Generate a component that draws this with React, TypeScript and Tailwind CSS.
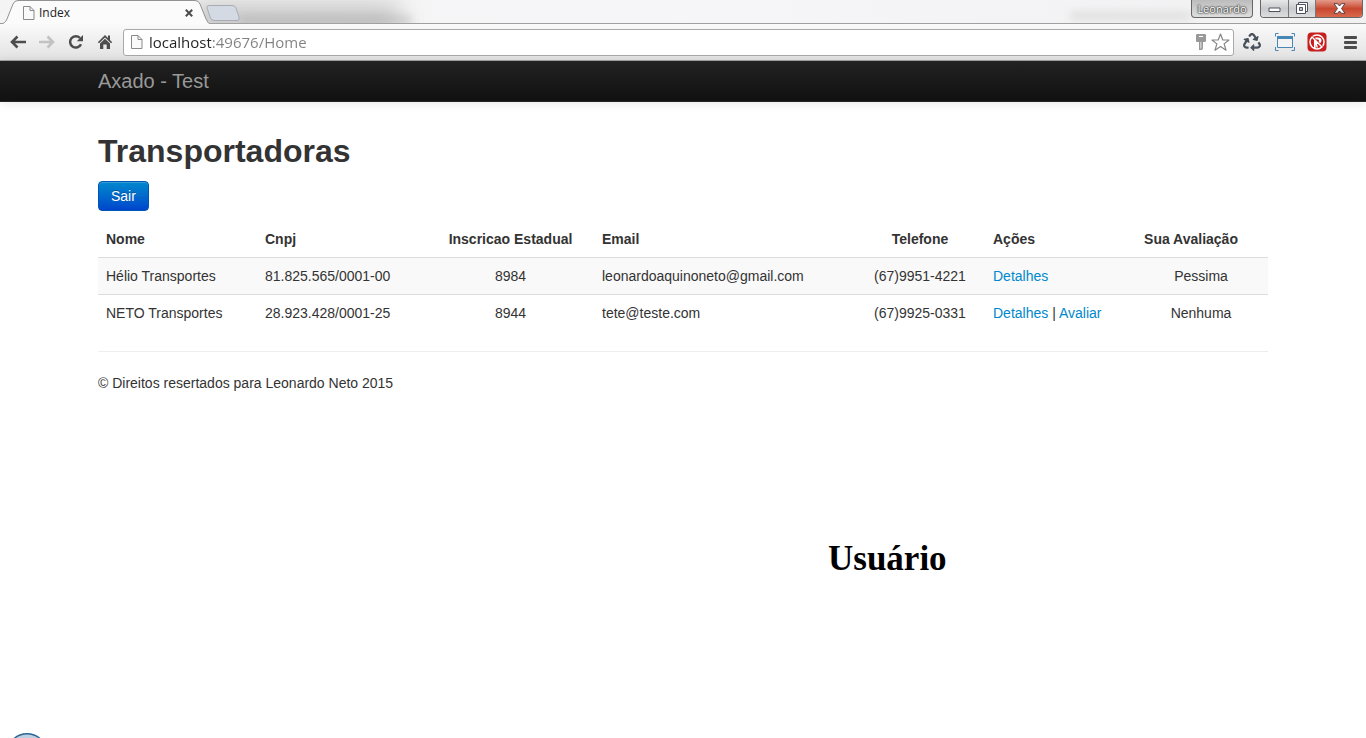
import React from "react";
import { FaRecycle } from "react-icons/fa";

function PageIcon() {
  return (
    <svg width="12" height="14" viewBox="0 0 12 14" fill="#fafafa" stroke="#8a8a8a" aria-hidden="true">
      <path d="M.5.5h6.500l4 4v9H.5z" />
      <path d="M7 .5v4h4" fill="none" />
    </svg>
  );
}

function TabStrip() {
  return (
    <div className="relative flex h-6 items-start overflow-hidden bg-linear-to-r from-[#f4f4f4] via-[#f6f6f8] to-[#f1f1f2]">
      <div className="absolute top-1 left-[190px] h-8 w-[210px] bg-[#b9b9b9] opacity-80 blur-[12px]" />
      <div className="absolute top-4 left-[240px] h-2 w-[172px] bg-[#a6a6a6] opacity-40 blur-[4px]" />
      <div className="absolute top-3 left-[1070px] h-2 w-[120px] bg-[#d0d0d0] opacity-60 blur-[4px]" />
      <div className="absolute inset-x-0 bottom-0 h-px bg-[#a0a0a0]" />
      <div className="relative flex h-6 w-[209px] items-center">
        <svg className="absolute inset-0" width="209" height="24" viewBox="0 0 209 24" aria-hidden="true">
          <path d="M0 25v-1q5 0 7-5L13 4q1.500-3.500 5-3.500h177q3.500 0 5 3.500l6 15q2 5 5 5v2z" fill="#fbfbfb" stroke="#929292" />
        </svg>
        <div className="relative flex w-full items-center pt-px pr-3 pl-[23px]">
          <PageIcon />
          <span className="ml-1 grow font-['Open_Sans',sans-serif] text-xs leading-4 text-[#222]">Index</span>
          <button aria-label="Fechar guia" className="p-1">
            <svg width="8" height="8" viewBox="0 0 8 8" stroke="#4c4c4c" strokeWidth="2">
              <path d="m.8.8 6.400 6.400M7.200.8.8 7.200" />
            </svg>
          </button>
        </div>
      </div>
      <button aria-label="Nova guia" className="relative -ml-1 mt-1">
        <svg width="36" height="18" viewBox="0 0 36 18">
          <path d="M4 1.500h23q3 0 4 2.500l3 9q1 3.500-2 3.500H9q-2.500 0-3.500-2.500L2 4q-.8-2.500 2-2.500z" fill="#d3dae3" stroke="#a9adb3" />
        </svg>
      </button>
      <div className="relative ml-auto flex pr-[3px]">
        <button className="mr-[7px] h-[18px] w-[62px] rounded-b-[4px] border border-t-0 border-[#666] bg-linear-to-b from-[#bcbcbc] to-[#dedede] font-['Open_Sans',sans-serif] text-[11px] leading-4 text-white [text-shadow:0_0_1px_#333,0_0_2px_#333,0_0_2px_#333]">
          Leonardo
        </button>
        <div className="flex h-[18px] overflow-hidden rounded-b-[4px] border border-t-0 border-[#666]">
          <button aria-label="Minimizar" className="flex w-7 items-end justify-center border-r border-[#777] bg-linear-to-b from-[#e8e8ea] via-[#c9cacd] to-[#dedee0] pb-1">
            <svg width="13" height="6" viewBox="0 0 13 6"><path d="M1 1h11v3.500H1z" fill="#fff" stroke="#50505f" /></svg>
          </button>
          <button aria-label="Restaurar" className="flex w-[27px] items-center justify-center border-r border-[#777] bg-linear-to-b from-[#e8e8ea] via-[#c9cacd] to-[#dedee0] pb-px">
            <svg width="12" height="12" viewBox="0 0 12 12" fill="#fff" stroke="#50505f">
              <path d="M2.500.5h9v9h-9z" />
              <path d="M.5 2.500h9v9h-9z" />
              <path d="M3.500 5.500h3v3h-3z" fill="#c9cacd" />
            </svg>
          </button>
          <button aria-label="Fechar" className="flex w-[46px] items-center justify-center bg-linear-to-b from-[#e39a8b] via-[#c8472f] to-[#d9694b] pb-px">
            <svg width="13" height="11" viewBox="0 0 13 11">
              <path d="M1 .7h3.500l2 2.300 2-2.300H12L8.500 5.500l3.500 4.800H8.500l-2-2.300-2 2.300H1l3.500-4.800z" fill="#fff" stroke="#56424a" />
            </svg>
          </button>
        </div>
      </div>
    </div>
  );
}

function Toolbar() {
  return (
    <div className="flex h-[37px] items-center border-b border-[#a3a3a3] bg-linear-to-b from-[#fafafa] to-[#e2e2e2] pr-[9px] pl-[10px]">
      <div className="flex items-center gap-[13px]">
        <button aria-label="Voltar">
          <svg width="16" height="14" viewBox="0 0 16 14" fill="none" stroke="#4d4d4d" strokeWidth="2.600"><path d="M7.500 1.500 2 7l5.500 5.500M2.500 7H16" /></svg>
        </button>
        <button aria-label="Avançar">
          <svg width="16" height="14" viewBox="0 0 16 14" fill="none" stroke="#c2c2c2" strokeWidth="2.600"><path d="M8.500 1.500 14 7l-5.500 5.500M13.500 7H0" /></svg>
        </button>
        <button aria-label="Recarregar">
          <svg width="16" height="16" viewBox="0 0 16 16">
            <path d="M13 10.200A5.700 5.700 0 1 1 12 4" fill="none" stroke="#4d4d4d" strokeWidth="2.500" />
            <path d="M15 1v6.200H8.800z" fill="#4d4d4d" />
          </svg>
        </button>
        <button aria-label="Página inicial">
          <svg width="16" height="16" viewBox="0 0 16 16" fill="#4d4d4d">
            <path d="M8 1 .8 8.300l1.200 1L8 3.500l6 5.800 1.200-1-2.200-2.200V1.500h-2v2.600z" />
            <path d="M3 9.500 8 4.800l5 4.700V15H9.700v-4.500H6.300V15H3z" />
          </svg>
        </button>
      </div>
      <div className="ml-[10px] flex h-[27px] grow items-center rounded-[3px] border border-[#a8a8a8] bg-white pr-[3px] pl-[7px]">
        <PageIcon />
        <input
          aria-label="Endereço"
          readOnly
          value="localhost:49676/Home"
          className="ml-[6px] min-w-0 grow bg-linear-to-r from-[#222] from-[62px] to-[#808080] to-[62px] bg-clip-text font-['Open_Sans',sans-serif] text-[15px] leading-5 text-transparent outline-none"
        />
        <button aria-label="Senhas salvas">
          <svg width="12" height="16" viewBox="0 0 12 16" fill="#999">
            <path fillRule="evenodd" d="M2 0h8q1 0 1 1v6q0 1-1 1H8v6.500L7 16H4V8H2Q1 8 1 7V1q0-1 1-1zm2 2v1h4V2zm1.500 6v6.500h.8V8z" />
          </svg>
        </button>
        <button aria-label="Adicionar aos favoritos" className="ml-1">
          <svg width="19" height="19" viewBox="0 0 19 19" fill="#fff" stroke="#858585" strokeWidth="1.200">
            <path strokeLinejoin="round" d="m9.500 1 2.300 6h6.200l-4.900 3.900 1.900 6.300-5.500-3.700L4 17.200l1.900-6.300L1 7h6.200z" />
          </svg>
        </button>
      </div>
      <div className="ml-[9px] flex items-center">
        <button aria-label="Reciclar" className="text-[#48515b]"><FaRecycle size={18} /></button>
        <button aria-label="Capturar tela" className="ml-[14px]">
          <svg width="20" height="18" viewBox="0 0 20 18" fill="none" stroke="#4787b5">
            <path d="M.5 3.500v-3h3M16.500.5h3v3M19.500 14v3.500h-3M3.500 17.500h-3V14" />
            <path d="M2.500 3.500h15v11h-15z" fill="#f3f3f3" />
            <path d="M2 4.500h16" strokeWidth="3" />
          </svg>
        </button>
        <button aria-label="Bloqueador" className="ml-3">
          <svg width="20" height="20" viewBox="0 0 20 20">
            <rect x=".5" y=".5" width="19" height="19" rx="4" fill="#c81e1e" />
            <circle cx="10" cy="10" r="7" fill="none" stroke="#fff" strokeWidth="1.500" />
            <path d="M7 16V7.500q0-2 2-2h2q3.500 0 3.500 3 0 2-2 3l-2.500.5 1 3.500H9.500l-.8-3V16z" fill="#fff" />
            <path d="M9.300 7.500h1.500q1.200 0 1.200 1.200T10.500 10H9.300z" fill="#c81e1e" />
            <path d="m5.500 4.500 10 10" stroke="#c81e1e" strokeWidth="1.200" />
            <path d="m5 5 10 10" stroke="#fff" strokeWidth="1.400" />
          </svg>
        </button>
        <button aria-label="Menu" className="ml-4">
          <svg width="14" height="14" viewBox="0 0 14 14" fill="#4d4d4d">
            <rect x="1" y="1" width="13" height="3" rx="1" />
            <rect x="1" y="6" width="13" height="3" rx="1" />
            <rect x="1" y="11" width="13" height="3" rx="1" />
          </svg>
        </button>
      </div>
    </div>
  );
}

const carriers = [
  { nome: "Hélio Transportes", cnpj: "81.825.565/0001-00", inscricao: "8984", email: "leonardoaquinoneto@gmail.com", fone: "(67)9951-4221", avaliar: false, nota: "Pessima" },
  { nome: "NETO Transportes", cnpj: "28.923.428/0001-25", inscricao: "8944", email: "tete@teste.com", fone: "(67)9925-0331", avaliar: true, nota: "Nenhuma" },
];

const cell = "border-t border-[#ddd] p-2";

function CarriersTable() {
  return (
    <table className="mt-[10px] w-full table-fixed text-left">
      <colgroup>
        <col className="w-[159px]" />
        <col className="w-[170px]" />
        <col className="w-[167px]" />
        <col className="w-[261px]" />
        <col className="w-[130px]" />
        <col className="w-[149px]" />
        <col className="w-[134px]" />
      </colgroup>
      <thead>
        <tr>
          <th className="p-2">Nome</th>
          <th className="p-2">Cnpj</th>
          <th className="p-2 text-center">Inscricao Estadual</th>
          <th className="p-2">Email</th>
          <th className="p-2 text-center">Telefone</th>
          <th className="p-2">Ações</th>
          <th className="py-2 pr-5 text-center">Sua Avaliação</th>
        </tr>
      </thead>
      <tbody>
        {carriers.map((c) => (
          <tr key={c.cnpj} className="odd:bg-[#f9f9f9]">
            <td className={cell}>{c.nome}</td>
            <td className={cell}>{c.cnpj}</td>
            <td className={`${cell} text-center`}>{c.inscricao}</td>
            <td className={cell}>{c.email}</td>
            <td className={`${cell} text-center`}>{c.fone}</td>
            <td className={cell}>
              <a href="#detalhes" className="text-[#0088cc]">Detalhes</a>
              {c.avaliar && (
                <>
                  {" | "}
                  <a href="#avaliar" className="text-[#0088cc]">Avaliar</a>
                </>
              )}
            </td>
            <td className={`${cell} text-center`}>{c.nota}</td>
          </tr>
        ))}
      </tbody>
    </table>
  );
}

export default function App() {
  return (
    <div className="flex min-h-screen flex-col bg-white font-['Liberation_Sans',Arial,sans-serif] text-sm leading-5 text-[#333]">
      <header>
        <TabStrip />
        <Toolbar />
      </header>
      <nav className="border-b border-[#252525] bg-linear-to-b from-[#222] to-[#111] shadow-[0_1px_10px_rgba(0,0,0,0.1)]">
        <div className="mx-auto flex max-w-[1170px] py-[10px]">
          <a href="#inicio" className="text-xl leading-5 text-[#999]">Axado - Test</a>
        </div>
      </nav>
      <main className="mx-auto w-full max-w-[1170px] pt-[29px]">
        <h2 className="text-[32px] leading-10 font-bold">Transportadoras</h2>
        <button className="mt-[10px] block rounded-[4px] border border-[#0055b3] bg-linear-to-b from-[#0088cc] to-[#0044cc] px-3 py-1 text-white shadow-[inset_0_1px_0_rgba(255,255,255,0.2)] [text-shadow:0_-1px_0_rgba(0,0,0,0.25)]">
          Sair
        </button>
        <CarriersTable />
        <hr className="mt-5 mb-[21px] border-t border-[#eee]" />
        <footer>© Direitos resertados para Leonardo Neto 2015</footer>
      </main>
      <p className="mt-[146px] ml-[828px] font-['Liberation_Serif',serif] text-[35px] leading-10 font-bold text-black">Usuário</p>
      <svg className="mt-auto ml-3" width="30" height="5" viewBox="0 0 30 5" aria-hidden="true">
        <circle cx="15" cy="20.500" r="19.800" fill="#bcd0e2" stroke="#2f6593" strokeWidth="1.400" />
      </svg>
    </div>
  );
}
